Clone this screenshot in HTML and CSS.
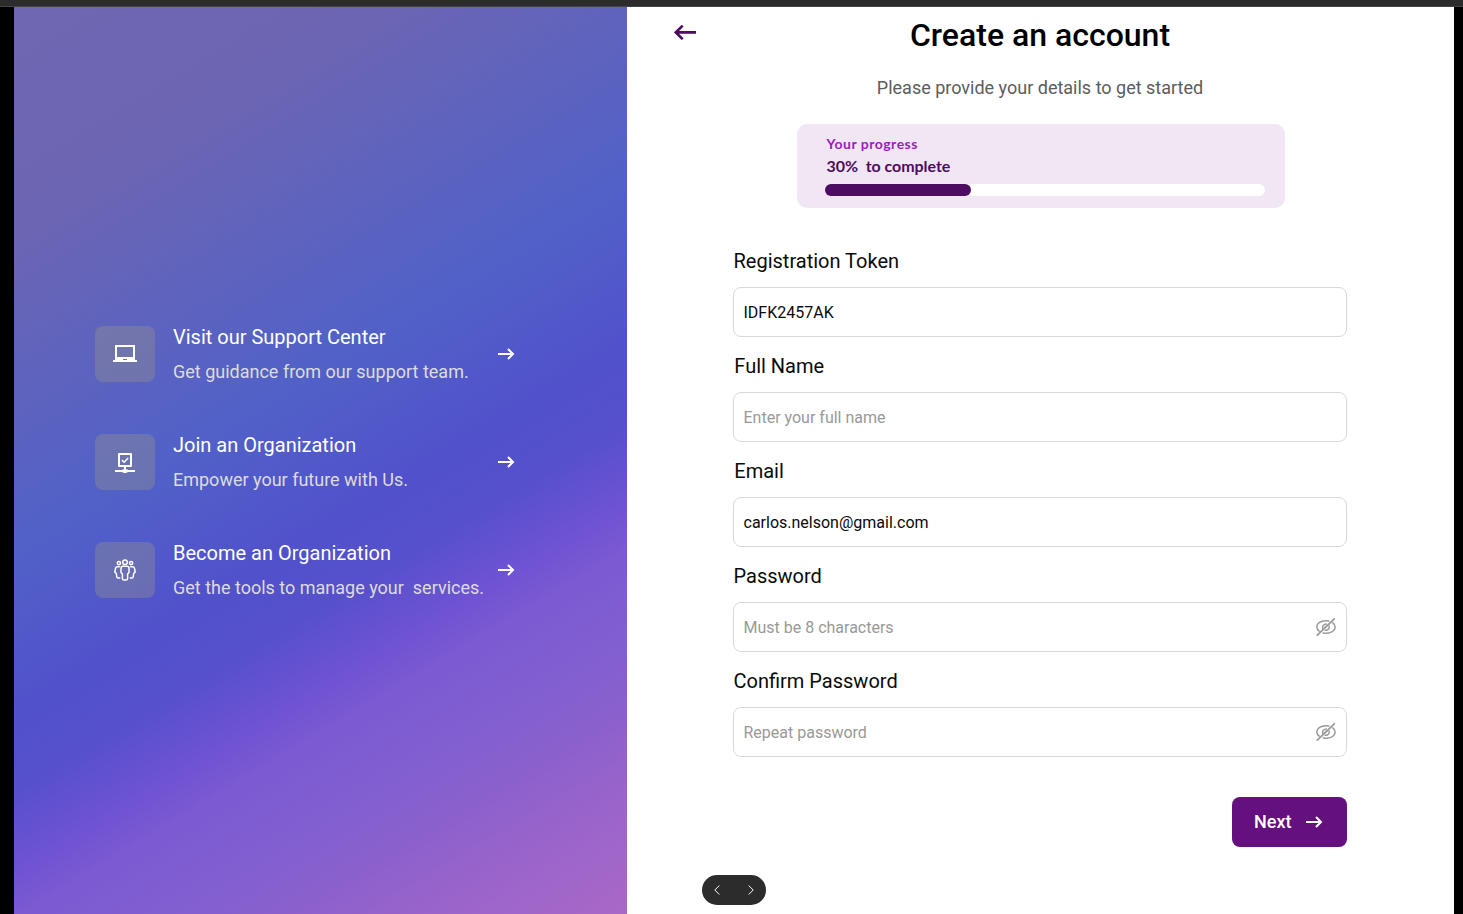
FILE: index.html
```html
<!DOCTYPE html>
<html lang="en">
<head>
<meta charset="utf-8">
<title>Create an account</title>
<link rel="stylesheet" href="styles.css">
</head>
<body>
<svg class="defs" aria-hidden="true">
  <symbol id="arrow" viewBox="0 0 17 12"><path d="M0 6h15M10 1l5 5-5 5" fill="none" stroke="currentColor" stroke-width="2"/></symbol>
  <symbol id="eye-off" viewBox="0 0 20 18"><g fill="none" stroke="currentColor" stroke-width="1.5" stroke-linecap="round"><path d="M3.2 13.1C1.7 12 .8 10.500.8 9 .8 5.300 4.900 2.700 10 2.700c1 0 1.900.1 2.800.3M16.800 4.900c1.500 1.100 2.400 2.600 2.400 4.100 0 3.600-4.100 6.300-9.200 6.300-1 0-2-.1-2.800-.3"/><path d="M6.700 10.300c-.6-2.400 1.100-4.400 3.600-4.400M13.100 7.900c.7 2.600-1.300 4.800-4 4.300M9.200 9.500c.2-.7.6-1.100 1.300-1.300"/><path d="M1.300 17.100 18.300.9" stroke-width="1.700"/></g></symbol>
</svg>
<div class="topbar"></div>
<main class="screen">
  <aside class="promo">
    <a class="promo-item">
      <span class="tile"><svg width="24" height="18" viewBox="0 0 24 18"><path fill="#fff" fill-rule="evenodd" d="M2 0h20v15h2v2H0v-2h2zM4 2v10h16V2zM10 14v1h4v-1z"/></svg></span>
      <span class="promo-text"><strong>Visit our Support Center</strong><span>Get guidance from our support team.</span></span>
      <svg width="17" height="12"><use href="#arrow"/></svg>
    </a>
    <a class="promo-item">
      <span class="tile"><svg class="drop" width="20" height="20" viewBox="0 0 20 20"><path d="M4 1h12v12H4zM10 13v4M0 18h20" fill="none" stroke="#fff" stroke-width="2" stroke-linejoin="round"/><path d="M7 16.500h6V19l-2 1H9l-2-1z" fill="#fff"/><path d="m6.900 7 2.200 2.200L13.200 5" fill="none" stroke="#fff" stroke-width="1.600"/></svg></span>
      <span class="promo-text"><strong>Join an Organization</strong><span>Empower your future with Us.</span></span>
      <svg width="17" height="12"><use href="#arrow"/></svg>
    </a>
    <a class="promo-item">
      <span class="tile"><svg width="22" height="22" viewBox="0 0 22 22"><g fill="none" stroke="#fff" stroke-width="1.500" stroke-linejoin="round" stroke-linecap="round"><circle cx="11" cy="3.200" r="2.300"/><circle cx="4.900" cy="4.100" r="1.600"/><circle cx="17.100" cy="4.100" r="1.600"/><path d="M9 7.200h4c1.200 0 2 .8 2 2v4.300l-1.400 1.600v4.300c0 1-.6 1.600-1.600 1.600h-2c-1 0-1.600-.6-1.600-1.600v-4.300L7 13.500V9.200c0-1.200.8-2 2-2z"/><path d="M5.300 7.700H3.600c-1.200 0-1.900.6-2.100 1.700L.8 13l1.500 1.600.5 3.300c.1.700.5 1 1.200 1h1.700M16.700 7.700h1.700c1.200 0 1.900.6 2.100 1.700l.7 3.600-1.500 1.600-.5 3.300c-.1.700-.5 1-1.200 1h-1.700"/></g></svg></span>
      <span class="promo-text"><strong>Become an Organization</strong><span>Get the tools to manage your&nbsp; services.</span></span>
      <svg width="17" height="12"><use href="#arrow"/></svg>
    </a>
  </aside>
  <section class="signup">
    <header class="heading">
      <svg class="back" width="22" height="16" viewBox="0 0 22 16"><path d="M22 8.400H2M8.700 1.600 1.800 8.400l6.900 6.800" fill="none" stroke="#4d0b61" stroke-width="2.600"/></svg>
      <h1>Create an account</h1>
      <p>Please provide your details to get started</p>
    </header>
    <div class="progress">
      <span class="progress-label">Your progress</span>
      <span class="progress-value">30%&nbsp; to complete</span>
      <div class="track"><div class="bar"></div></div>
    </div>
    <form class="form">
      <div class="field"><label for="token">Registration Token</label><div class="box"><input id="token" value="IDFK2457AK"></div></div>
      <div class="field"><label class="inset" for="name">Full Name</label><div class="box"><input id="name" placeholder="Enter your full name"></div></div>
      <div class="field"><label class="inset" for="email">Email</label><div class="box"><input id="email" value="carlos.nelson@gmail.com"></div></div>
      <div class="field"><label for="pw">Password</label><div class="box"><input id="pw" placeholder="Must be 8 characters"><svg class="eye" width="20" height="18"><use href="#eye-off"/></svg></div></div>
      <div class="field"><label for="pw2">Confirm Password</label><div class="box"><input id="pw2" placeholder="Repeat password"><svg class="eye" width="20" height="18"><use href="#eye-off"/></svg></div></div>
      <button class="next" type="button"><span>Next</span><svg width="17" height="12"><use href="#arrow"/></svg></button>
    </form>
    <nav class="pager">
      <svg width="6" height="10" viewBox="0 0 6 10"><path d="M5.300.5.800 5l4.500 4.500"/></svg>
      <svg width="6" height="10" viewBox="0 0 6 10"><path d="M.7.500 5.200 5 .7 9.500"/></svg>
    </nav>
  </section>
</main>
</body>
</html>
```

FILE: styles.css
```css
* { box-sizing: border-box; }
body {
  margin: 0;
  height: 914px;
  overflow: hidden;
  background: #000;
  font-family: Roboto, "Liberation Sans", sans-serif;
}
.defs { display: none; }
.topbar { height: 7px; background: #2c2c2c; border-bottom: 1px solid #444; }
.screen { display: flex; height: 907px; padding: 0 9px 0 14px; }

.promo {
  width: 613px;
  padding: 319px 0 0 81px;
  display: flex;
  flex-direction: column;
  gap: 52px;
  background: linear-gradient(149deg, #7067b2 0, #6c65b3 190px, #5161c8 470px, #5151cb 610px, #5750cd 675px, #6f53d3 742px, #7b5ad2 781px, #815fd1 850px, #8a60cd 914px, #9563cb 965px, #9e65ca 1015px, #a868c7 1093px);
}
.promo-item { display: flex; align-items: center; height: 56px; color: #fff; }
.tile {
  width: 60px;
  height: 56px;
  margin-right: 18px;
  border-radius: 8px;
  background: rgba(144, 144, 144, .4);
  display: flex;
  align-items: center;
  justify-content: center;
}
.drop { margin-top: 2px; }
.promo-text { width: 325px; display: flex; flex-direction: column; white-space: nowrap; }
.promo-text strong { font-weight: 400; font-size: 20px; line-height: 24px; }
.promo-text span { margin-top: 11px; font-size: 18px; line-height: 24px; color: #dcdcdc; }

.signup { width: 827px; padding-right: 1px; background: #fff; display: flex; flex-direction: column; align-items: center; }
.heading { position: relative; width: 100%; height: 117px; text-align: center; }
.back { position: absolute; left: 47px; top: 17px; }
h1 { margin: 0; padding-top: 8px; font-size: 32px; line-height: 40px; font-weight: 500; }
.heading p { margin: 21px 0 0; font-size: 18px; line-height: 24px; color: #5c5c5c; }

.progress {
  width: 488px;
  height: 84px;
  margin-left: 1px;
  padding: 11px 20px 0 28px;
  border-radius: 10px;
  background: #f1e6f3;
  display: flex;
  flex-direction: column;
  font-family: Lato, sans-serif;
  font-weight: 700;
}
.progress-label { padding-left: 2px; font-size: 14px; line-height: 18px; letter-spacing: .5px; color: #9b1cc0; }
.progress-value { padding-left: 2px; margin-top: 2px; font-size: 16px; line-height: 22px; letter-spacing: -.05px; color: #4d0b61; }
.track { margin-top: 7px; height: 12px; border-radius: 6px; background: #fff; }
.bar { width: 146px; height: 12px; border-radius: 6px; background: #4d0b61; }

.form { width: 614px; margin-top: 41px; display: flex; flex-direction: column; gap: 17px; }
.field { height: 88px; display: flex; flex-direction: column; }
label { height: 38px; padding-left: .5px; font-size: 20px; line-height: 24px; color: #0a0a0a; }
.inset { padding-left: 1.3px; }
.box { height: 50px; padding: 0 10.5px 0 9.5px; border: 1px solid #d9d9d9; border-radius: 8px; display: flex; align-items: center; }
input { flex: 1; min-width: 0; padding: 1px 0 0; border: 0; outline: 0; background: none; font: 16px/20px Roboto, sans-serif; color: #0a0a0a; }
input::placeholder { color: #999; opacity: 1; }
.eye { color: #999; }
.next {
  align-self: flex-end;
  width: 115px;
  height: 50px;
  margin-top: 23px;
  padding: 0 0 0 22px;
  border: 0;
  border-radius: 8px;
  background: #65107f;
  color: #fff;
  font: 500 18px/24px Roboto, sans-serif;
  display: flex;
  align-items: center;
  gap: 14.5px;
}
.pager {
  align-self: flex-start;
  width: 64px;
  height: 30px;
  margin: 28px 0 0 75px;
  padding: 0 12px;
  border-radius: 15px;
  background: #2c2c2c;
  display: flex;
  align-items: center;
  justify-content: space-between;
}
.pager path { fill: none; stroke: #fff; stroke-width: 1; }
```
